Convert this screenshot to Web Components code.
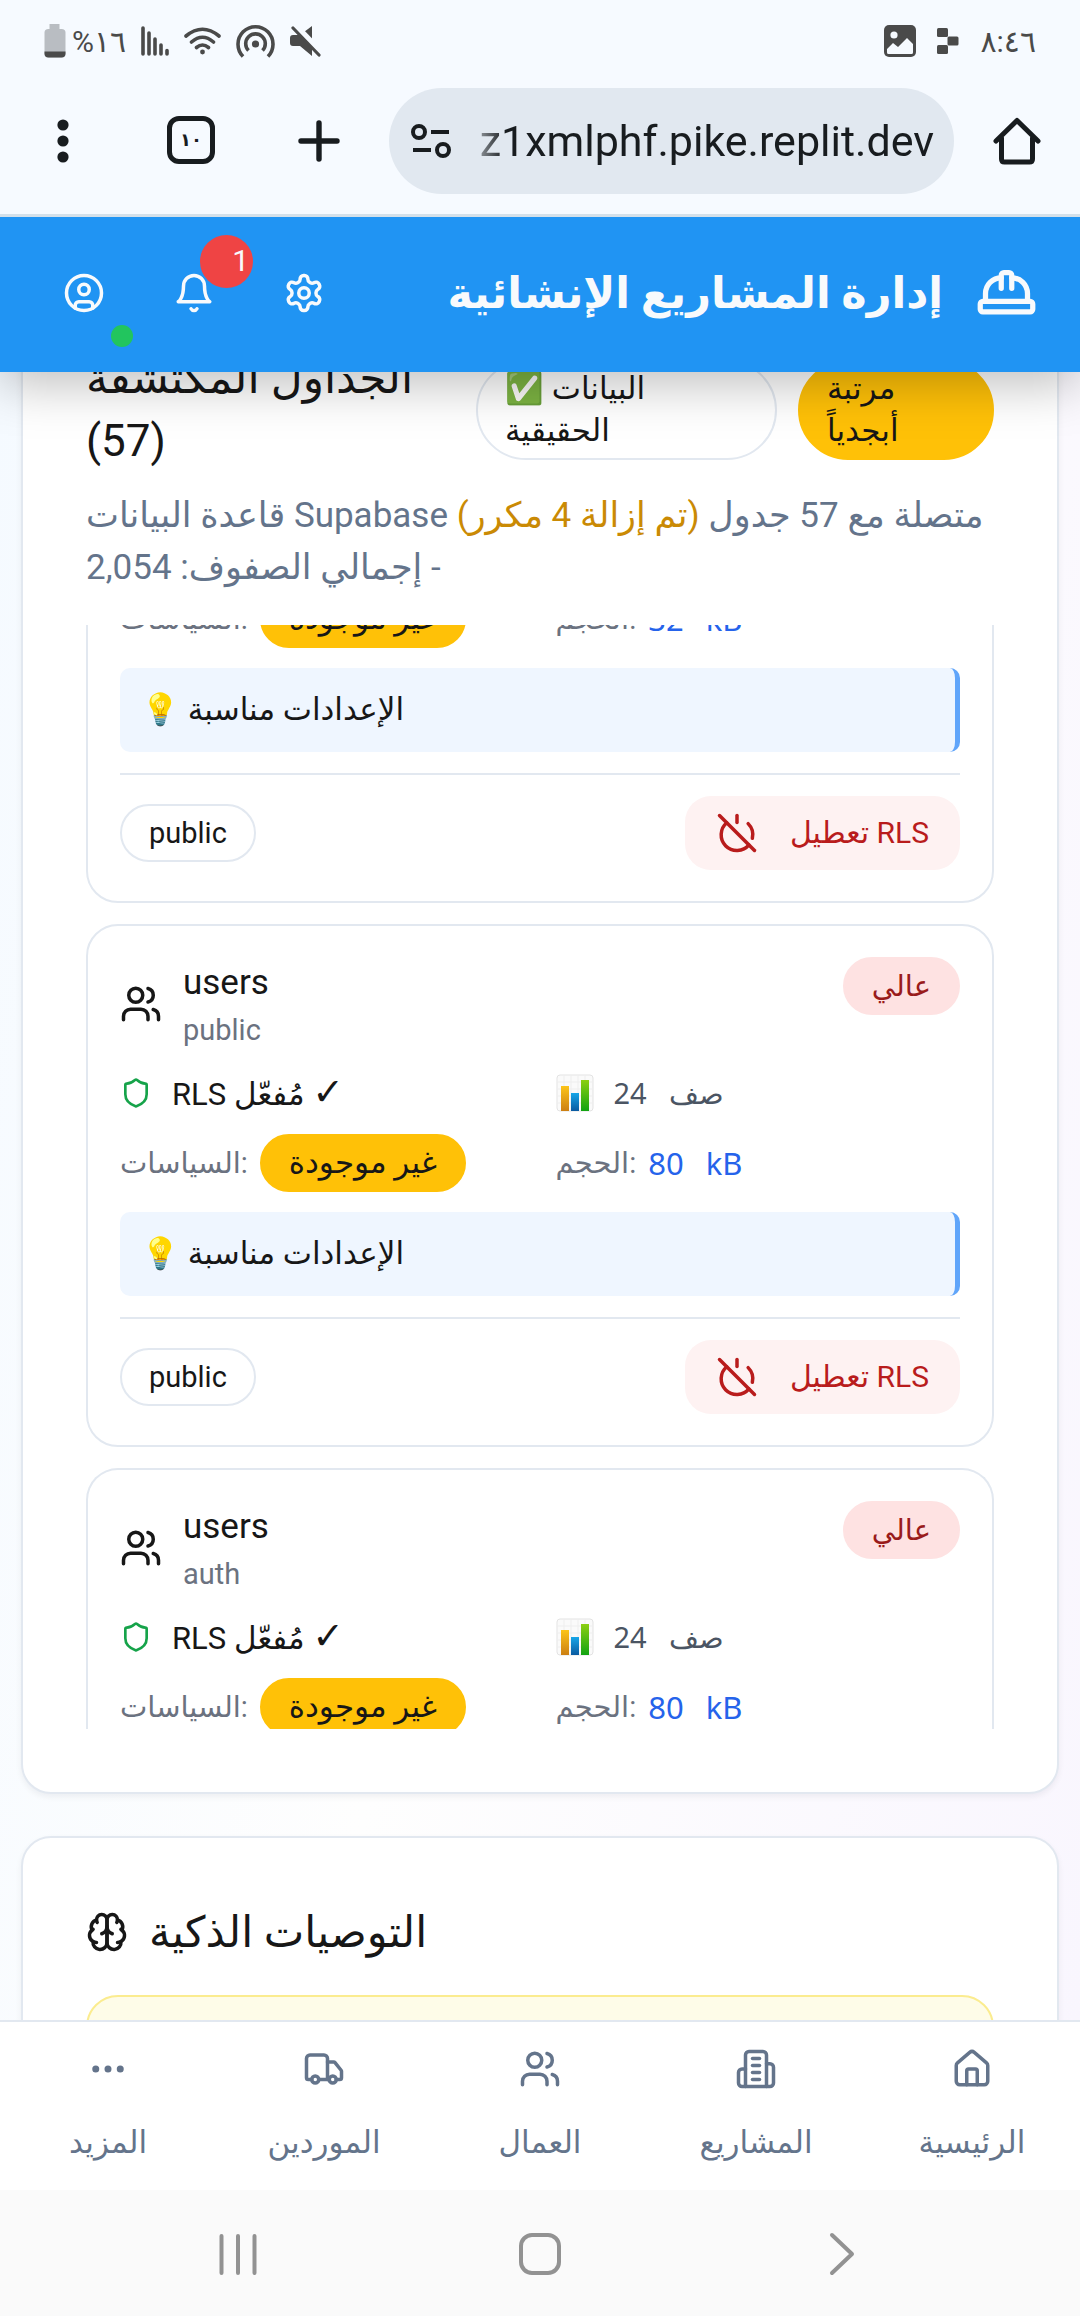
<!DOCTYPE html>
<html lang="ar">
<head>
<meta charset="utf-8">
<meta name="viewport" content="width=device-width, initial-scale=1">
<title>إدارة المشاريع الإنشائية</title>
<style>
  html, body { margin: 0; height: 100%; }
  body {
    --line: #e2e8f0;
    --muted: #64748b;
    --ink: #171717;
    --amber: #ffc107;
    font-family: Roboto, "Noto Sans", "DejaVu Sans", sans-serif;
    color: var(--ink);
    background: #f8fafc;
  }
</style>
</head>
<body>
<phone-screen></phone-screen>

<script>
const ICONS = {
  user: '<circle cx="12" cy="12" r="10"/><circle cx="12" cy="10" r="3"/><path d="M7 20.7V19a2 2 0 0 1 2-2h6a2 2 0 0 1 2 2v1.7"/>',
  bell: '<path d="M6 8a6 6 0 0 1 12 0c0 7 3 9 3 9H3s3-2 3-9"/><path d="M10.3 21a1.94 1.94 0 0 0 3.4 0"/>',
  settings: '<path d="M12.22 2h-.44a2 2 0 0 0-2 2v.18a2 2 0 0 1-1 1.73l-.43.25a2 2 0 0 1-2 0l-.15-.08a2 2 0 0 0-2.73.73l-.22.38a2 2 0 0 0 .73 2.73l.15.1a2 2 0 0 1 1 1.72v.51a2 2 0 0 1-1 1.74l-.15.09a2 2 0 0 0-.73 2.73l.22.38a2 2 0 0 0 2.73.73l.15-.08a2 2 0 0 1 2 0l.43.25a2 2 0 0 1 1 1.73V20a2 2 0 0 0 2 2h.44a2 2 0 0 0 2-2v-.18a2 2 0 0 1 1-1.73l.43-.25a2 2 0 0 1 2 0l.15.08a2 2 0 0 0 2.73-.73l.22-.39a2 2 0 0 0-.73-2.73l-.15-.08a2 2 0 0 1-1-1.74v-.5a2 2 0 0 1 1-1.74l.15-.09a2 2 0 0 0 .73-2.73l-.22-.38a2 2 0 0 0-2.73-.73l-.15.08a2 2 0 0 1-2 0l-.43-.25a2 2 0 0 1-1-1.73V4a2 2 0 0 0-2-2z"/><circle cx="12" cy="12" r="3"/>',
  hardhat: '<path d="M2 18a1 1 0 0 0 1 1h18a1 1 0 0 0 1-1v-2a1 1 0 0 0-1-1H3a1 1 0 0 0-1 1v2z"/><path d="M10 10V5a1 1 0 0 1 1-1h2a1 1 0 0 1 1 1v5"/><path d="M4 15v-3a6 6 0 0 1 6-6"/><path d="M14 6a6 6 0 0 1 6 6v3"/>',
  users: '<path d="M16 21v-2a4 4 0 0 0-4-4H6a4 4 0 0 0-4 4v2"/><circle cx="9" cy="7" r="4"/><path d="M22 21v-2a4 4 0 0 0-3-3.87"/><path d="M16 3.13a4 4 0 0 1 0 7.75"/>',
  shield: '<path d="M20 13c0 5-3.5 7.5-7.66 8.95a1 1 0 0 1-.67-.01C7.5 20.5 4 18 4 13V6a1 1 0 0 1 1-1c2 0 4.5-1.2 6.24-2.72a1.17 1.17 0 0 1 1.52 0C14.51 3.81 17 5 19 5a1 1 0 0 1 1 1z"/>',
  poweroff: '<path d="M18.36 6.64A9 9 0 0 1 20.77 15"/><path d="M6.16 6.16a9 9 0 1 0 12.68 12.68"/><path d="M12 2v4"/><path d="m2 2 20 20"/>',
  brain: '<path d="M12 5a3 3 0 1 0-5.997.125 4 4 0 0 0-2.526 5.77 4 4 0 0 0 .556 6.588A4 4 0 1 0 12 18Z"/><path d="M12 5a3 3 0 1 1 5.997.125 4 4 0 0 1 2.526 5.77 4 4 0 0 1-.556 6.588A4 4 0 1 1 12 18Z"/><path d="M15 13a4.5 4.5 0 0 1-3-4 4.5 4.5 0 0 1-3 4"/><path d="M17.599 6.5a3 3 0 0 0 .399-1.375"/><path d="M6.003 5.125A3 3 0 0 0 6.401 6.5"/><path d="M3.477 10.896a4 4 0 0 1 .585-.396"/><path d="M19.938 10.5a4 4 0 0 1 .585.396"/><path d="M6 18a4 4 0 0 1-1.967-.516"/><path d="M19.967 17.484A4 4 0 0 1 18 18"/>',
  more: '<circle cx="12" cy="12" r="1"/><circle cx="19" cy="12" r="1"/><circle cx="5" cy="12" r="1"/>',
  truck: '<path d="M14 18V6a2 2 0 0 0-2-2H4a2 2 0 0 0-2 2v11a1 1 0 0 0 1 1h2"/><path d="M15 18H9"/><path d="M19 18h2a1 1 0 0 0 1-1v-3.65a1 1 0 0 0-.22-.624l-3.48-4.35A1 1 0 0 0 17.52 8H14"/><circle cx="17" cy="18" r="2"/><circle cx="7" cy="18" r="2"/>',
  building: '<path d="M6 22V4a2 2 0 0 1 2-2h8a2 2 0 0 1 2 2v18Z"/><path d="M6 12H4a2 2 0 0 0-2 2v6a2 2 0 0 0 2 2h2"/><path d="M18 9h2a2 2 0 0 1 2 2v9a2 2 0 0 1-2 2h-2"/><path d="M10 6h4"/><path d="M10 10h4"/><path d="M10 14h4"/><path d="M10 18h4"/>',
  house: '<path d="M15 21v-8a1 1 0 0 0-1-1h-4a1 1 0 0 0-1 1v8"/><path d="M3 10a2 2 0 0 1 .709-1.528l7-5.999a2 2 0 0 1 2.582 0l7 5.999A2 2 0 0 1 21 10v9a2 2 0 0 1-2 2H5a2 2 0 0 1-2-2z"/>'
};

const RESET = `
  :host, *, *::before, *::after { box-sizing: border-box; }
  button { font: inherit; color: inherit; background: none; border: 0; padding: 0; margin: 0; }
  svg { display: block; flex: none; }
  a { color: inherit; text-decoration: none; }
`;

function define(name, html, setup) {
  const template = document.createElement('template');
  template.innerHTML = html;
  customElements.define(name, class extends HTMLElement {
    constructor() {
      super();
      this.attachShadow({ mode: 'open' }).append(template.content.cloneNode(true));
    }
    connectedCallback() { if (setup) setup(this, this.shadowRoot); }
  });
}

/* Line icon on a 24-unit grid */
define('line-icon', `
  <style>
    :host { display: block; flex: none; width: 42px; height: 42px; }
    svg { display: block; width: 100%; height: 100%; fill: none; stroke: currentColor;
          stroke-width: 2; stroke-linecap: round; stroke-linejoin: round; }
  </style>
  <svg viewBox="0 0 24 24" aria-hidden="true"></svg>`,
  (el, root) => { root.querySelector('svg').innerHTML = ICONS[el.getAttribute('name')]; });

define('pill-badge', `
  <style>
    :host { display: inline-block; flex: none; border: 2px solid var(--line); border-radius: 50px;
            padding: 6px 27px; font-size: 31px; line-height: 42px; }
    :host([tone="amber"]) { background: var(--amber); border-color: var(--amber); }
    :host([tone="red"]) { background: #fee2e2; border-color: #fee2e2; color: #991b1b; font-size: 29px; }
  </style><slot></slot>`);

define('status-bar', `
  <style>${RESET}
    :host { display: flex; direction: rtl; justify-content: space-between; align-items: center;
            height: 82px; padding: 0 44px; color: #4a4a4a; font-size: 30px; }
    div { display: flex; align-items: center; direction: ltr; }
    .left { gap: 15px; } .right { gap: 21px; }
    .charge { display: flex; align-items: center; gap: 6px; }
  </style>
  <div class="right">
    <svg width="32" height="32" viewBox="0 0 32 32"><rect width="32" height="32" rx="5" fill="#4a4a4a"/><circle cx="10" cy="10" r="3.6" fill="#f6faff"/><path d="M3 24l6-6 5 4 9-9 6 6v8.500q0 1.500-1.500 1.500h-23q-1.500 0-1.500-1.500z" fill="#f6faff"/></svg>
    <svg width="22" height="26" viewBox="0 0 22 26" fill="#4a4a4a"><rect width="11" height="9" rx="1.500"/><rect x="10.500" y="8.500" width="11" height="9" rx="1.500"/><rect y="17" width="11" height="9" rx="1.500"/></svg>
    <span>٨:٤٦</span>
  </div>
  <div class="left">
    <div class="charge">
      <svg width="22" height="34" viewBox="0 0 22 34"><path d="M5.500 0h10v5h2q4 0 4 3.500v21q0 4-4 4h-13q-4 0-4-4v-21q0-3.500 4-3.500h1z" fill="#b9bdc2"/><path d="M.5 27.500h21v2q0 4-4 4h-13q-4 0-4-4z" fill="#4a4a4a"/></svg>
      <span>%١٦</span>
    </div>
    <svg width="28" height="30" viewBox="0 0 28 30" stroke="#4a4a4a" stroke-width="3.600" stroke-linecap="round"><path d="M2 2v26M8 7v21M14 13v15M20 19v9M26 24.500v3.500"/></svg>
    <svg width="37" height="28" viewBox="0 0 37 28" fill="none" stroke="#4a4a4a" stroke-width="3.600" stroke-linecap="round"><path d="M2 9q16.500-13.500 33 0M7.500 15q11-9.500 22 0M12.500 20.500q6-5 12 0"/><circle cx="18.500" cy="25" r="2.400" fill="#4a4a4a" stroke="none"/></svg>
    <svg width="39" height="34" viewBox="0 0 39 34" fill="none" stroke="#4a4a4a" stroke-width="3.600" stroke-linecap="butt"><path d="M7 32.500A17.500 17.500 0 1 1 32 32.500M12.500 26.500A9.800 9.800 0 1 1 26.500 26.500"/><circle cx="19.500" cy="20" r="3.600" fill="#4a4a4a" stroke="none"/></svg>
    <svg width="31" height="32" viewBox="0 0 31 32"><path d="M0 13q0-3 3-3h7L22 1v30L10 21H3q-3 0-3-3z" fill="#4a4a4a"/><path d="M0 -1l30 31" stroke="#f6faff" stroke-width="6" transform="translate(2.500 -1.500)"/><path d="M3 3l26 27" stroke="#4a4a4a" stroke-width="3.200" stroke-linecap="round"/></svg>
  </div>`);

define('browser-bar', `
  <style>${RESET}
    :host { display: flex; align-items: center; height: 132px; padding: 0 38px 14px; color: #181c1f;
            position: relative; z-index: 3; background: #f6faff; }
    button { display: grid; place-items: center; width: 50px; height: 50px; }
    .tools { display: flex; gap: 79px; margin-right: 45px; }
    .tabs { border: 5px solid #181c1f; border-radius: 12px; width: 48px; height: 48px; font-size: 18px; font-weight: 700; line-height: 38px; }
    label { display: flex; align-items: center; gap: 24px; flex: 1; min-width: 0; height: 106px; margin-right: 38px;
            padding: 0 20px 0 22px; border-radius: 53px; background: #e1e8f0; }
    input { flex: 1; min-width: 0; height: 64px; padding: 0; border: 0; outline: 0; background: none; color: inherit;
            font: 43px Roboto, sans-serif; text-align: right;
            -webkit-mask-image: linear-gradient(90deg, #0005, #000 30px); mask-image: linear-gradient(90deg, #0005, #000 30px); }
  </style>
  <div class="tools">
    <button aria-label="القائمة"><svg width="12" height="44" viewBox="0 0 12 44" fill="currentColor"><circle cx="6" cy="6" r="5.600"/><circle cx="6" cy="22" r="5.600"/><circle cx="6" cy="38" r="5.600"/></svg></button>
    <button class="tabs" aria-label="علامات التبويب">١٠</button>
    <button aria-label="علامة تبويب جديدة"><svg width="42" height="42" viewBox="0 0 42 42" stroke="currentColor" stroke-width="5.400" stroke-linecap="round"><path d="M21 3v36M3 21h36"/></svg></button>
  </div>
  <label>
    <svg width="40" height="34" viewBox="0 0 40 34" fill="none" stroke="currentColor" stroke-width="4"><circle cx="8" cy="8" r="6"/><circle cx="32" cy="26" r="6"/><path d="M20 8h18M2 26h18"/></svg>
    <input type="text" aria-label="عنوان الموقع" value="z1xmlphf.pike.replit.dev">
  </label>
  <button aria-label="الصفحة الرئيسية"><svg width="48" height="48" viewBox="0 0 48 48" fill="none" stroke="currentColor" stroke-width="5" stroke-linejoin="round" stroke-linecap="round"><path d="M3 24L24 3.500 45 24M8.500 21v21q0 3 3 3h25q3 0 3-3V21"/></svg></button>`);

define('app-header', `
  <style>${RESET}
    :host { display: flex; align-items: center; justify-content: space-between; position: relative; z-index: 2;
            height: 158px; padding: 0 42px 3px 52px; background: #2094f3; color: #f8fafc; flex: none;
            border-top: 3px solid #d3e0ea;
            box-shadow: 0 12px 48px rgba(0,0,0,.26); }
    .actions, .brand { display: flex; align-items: center; }
    .actions { gap: 46px; }
    .actions button { position: relative; display: grid; place-items: center; width: 64px; height: 106px; }
    .count { position: absolute; top: -5px; right: -27px; width: 53px; height: 53px; border-radius: 50%;
             background: #ef4444; font-size: 30px; line-height: 52px; text-align: right; padding-right: 4px; }
    .online { position: absolute; right: -17px; bottom: -1px; width: 22px; height: 22px; border-radius: 50%; background: #22c55e; }
    .brand { direction: rtl; gap: 32px; }
    h1 { margin: 0; font-size: 43px; line-height: 64px; font-weight: 700; }
    .brand line-icon { width: 63px; height: 63px; }
  </style>
  <div class="actions">
    <button aria-label="الحساب"><line-icon name="user"></line-icon><span class="online"></span></button>
    <button aria-label="الإشعارات"><line-icon name="bell"></line-icon><span class="count">1</span></button>
    <button aria-label="الإعدادات"><line-icon name="settings"></line-icon></button>
  </div>
  <div class="brand"><line-icon name="hardhat"></line-icon><h1>إدارة المشاريع الإنشائية</h1></div>`);

define('panel-card', `
  <style>
    :host { display: block; box-sizing: border-box; flex: none; padding: 63px; border: 2px solid var(--line); border-radius: 30px;
            background: #fff; box-shadow: 0 3px 6px rgba(15,23,42,.06); }
  </style><slot></slot>`);

/* One database table: heading, facts, advice and actions */
define('table-card', `
  <style>${RESET}
    :host { display: flex; flex-direction: column; gap: 21px; flex: none;
            padding: 31px 32px; border: 2px solid var(--line); border-radius: 32px; background: #fff; font-size: 31px; line-height: 42px; }
    header, footer, .fact, .who, .value { display: flex; }
    header { justify-content: space-between; align-items: flex-start; }
    .who { align-items: center; gap: 21px; }
    h3 { margin: 0; font-size: 35px; line-height: 52px; font-weight: 400; }
    .schema { margin: 0; color: #6b7280; font-size: 29px; }
    .facts { display: grid; grid-template-columns: 1fr 1fr; column-gap: 31px; }
    .fact { align-items: center; gap: 12px; min-width: 0; white-space: nowrap; }
    .first .fact { gap: 20px; height: 42px; }
    .second .fact { height: 56px; }
    .rls line-icon { width: 32px; height: 32px; color: #16a34a; }
    .tick { font-size: 38px; }
    .label { color: #6b7280; font-size: 29px; }
    .value { gap: 22px; font-family: "Noto Sans", "Open Sans", sans-serif; color: #4b5563; }
    .rows { font-size: 29px; }
    .size { color: #2563eb; }
    .tip { margin: 0; padding: 21px; background: #eff6ff; border-right: 5px solid #60a5fa; border-radius: 10px; }
    footer { align-items: center; justify-content: space-between; border-top: 2px solid var(--line); padding-top: 21px; }
    footer button { display: flex; align-items: center; gap: 32px; height: 74px; padding: 0 31px; border-radius: 26px;
                    background: #fef2f2; color: #b91c1c; font-size: 30px; }
    .scope { font-size: 29px; }
  </style>
  <header>
    <div class="who"><line-icon name="users"></line-icon><div><h3>users</h3><p class="schema"></p></div></div>
    <pill-badge tone="red">عالي</pill-badge>
  </header>
  <div class="facts first">
    <div class="fact rls"><line-icon name="shield"></line-icon><span>RLS مُفعّل <span class="tick">✓</span></span></div>
    <div class="fact">
      <svg width="38" height="38" viewBox="0 0 38 38" role="img" aria-label="رسم بياني">
        <defs>
          <linearGradient id="o" x2="0" y2="1"><stop stop-color="#fcc419"/><stop offset="1" stop-color="#cc7f12"/></linearGradient>
          <linearGradient id="b" x2="0" y2="1"><stop stop-color="#16a6e8"/><stop offset="1" stop-color="#0a5aa0"/></linearGradient>
          <linearGradient id="g" x2="0" y2="1"><stop stop-color="#8ccf12"/><stop offset="1" stop-color="#12a312"/></linearGradient>
        </defs>
        <rect x="1" y="1" width="36" height="36" rx="3" fill="#fafafa" stroke="#e3e3e3"/>
        <path d="M1 8h36M1 15h36M1 22h36M1 29h36M8 1v36M15 1v36M22 1v36M29 1v36" stroke="#eeeeee"/>
        <rect x="5" y="12" width="8" height="25" fill="url(#o)"/><rect x="15" y="19" width="8" height="18" fill="url(#b)"/><rect x="25" y="6" width="8" height="31" fill="url(#g)"/>
      </svg>
      <span class="value rows"><span>24</span> <span>صف</span></span></div>
  </div>
  <div class="facts second">
    <div class="fact"><span class="label">السياسات:</span><pill-badge tone="amber">غير موجودة</pill-badge></div>
    <div class="fact"><span class="label">الحجم:</span><span class="value size"><span class="amount"></span> <span>kB</span></span></div>
  </div>
  <p class="tip">💡 الإعدادات مناسبة</p>
  <footer><pill-badge class="scope">public</pill-badge>
    <button><line-icon name="poweroff"></line-icon><span>تعطيل RLS</span></button></footer>`,
  (el, root) => {
    root.querySelector('.amount').textContent = el.getAttribute('size');
    root.querySelector('.schema').textContent = el.getAttribute('schema');
    if (el.hasAttribute('scrolled')) root.querySelectorAll('header, .first').forEach(n => n.remove());
    if (el.hasAttribute('below')) root.querySelectorAll('.tip, footer').forEach(n => n.remove());
  });

define('tables-panel', `
  <style>${RESET}
    .top { display: flex; align-items: center; gap: 21px; height: 126px; }
    h2 { flex: 1; min-width: 0; margin: 0; font-size: 44px; line-height: 63px; font-weight: 400; }
    .real { width: 301px; } .sorted { width: 196px; }
    .about { margin: 17px 0 31px; font-size: 35px; line-height: 52px; color: var(--muted); }
    .about span { color: #ca8a04; }
    .list { max-height: 1104px; overflow: hidden; }
    .stack { display: flex; flex-direction: column; gap: 21px; margin-top: -67px; padding-bottom: 21px; }
    table-card[below] { min-height: 300px; border-bottom: 0; border-radius: 32px 32px 0 0; }
  </style>
  <panel-card>
    <div class="top">
      <h2>الجداول المكتشفة (57)</h2>
      <pill-badge class="real">✅ البيانات<br>الحقيقية</pill-badge>
      <pill-badge class="sorted" tone="amber">مرتبة<br>أبجدياً</pill-badge>
    </div>
    <p class="about">قاعدة البيانات Supabase متصلة مع 57 جدول <span>(تم إزالة 4 مكرر)</span> - إجمالي الصفوف: 2,054</p>
    <div class="list"><div class="stack">
      <table-card scrolled size="32"></table-card>
      <table-card schema="public" size="80"></table-card>
      <table-card below schema="auth" size="80"></table-card>
    </div></div>
  </panel-card>`);

define('advice-panel', `
  <style>${RESET}
    h2 { display: flex; align-items: center; gap: 21px; margin: 0 0 32px; font-size: 43px; line-height: 62px; font-weight: 400; }
    .note { height: 120px; border: 2px solid #fbec8f; border-radius: 32px; background: #fefce8; }
  </style>
  <panel-card><h2><line-icon name="brain"></line-icon>التوصيات الذكية</h2><div class="note"></div></panel-card>`);

define('app-nav', `
  <style>${RESET}
    :host { display: block; flex: none; position: relative; z-index: 2; background: #fff; border-top: 2px solid var(--line); color: var(--muted); }
    nav { display: grid; grid-template-columns: repeat(5, 1fr); direction: rtl; height: 168px; }
    a { display: flex; flex-direction: column; align-items: center; padding-top: 26px; gap: 32px; font-size: 31px; line-height: 42px; }
  </style>
  <nav>
    <a href="#home"><line-icon name="house"></line-icon>الرئيسية</a>
    <a href="#projects"><line-icon name="building"></line-icon>المشاريع</a>
    <a href="#workers"><line-icon name="users"></line-icon>العمال</a>
    <a href="#suppliers"><line-icon name="truck"></line-icon>الموردين</a>
    <a href="#more"><line-icon name="more"></line-icon>المزيد</a>
  </nav>`);

define('system-nav', `
  <style>${RESET}
    :host { display: flex; align-items: center; justify-content: space-between; flex: none; height: 126px;
            padding: 2px 20% 0; background: #fafafa; }
    button { display: grid; place-items: center; width: 44px; height: 44px; }
    svg { fill: none; stroke: #929292; stroke-width: 4; stroke-linecap: round; stroke-linejoin: round; }
  </style>
  <button aria-label="التطبيقات الأخيرة"><svg width="44" height="44"><path d="M5.500 4v37M22 4v37M38.500 4v37"/></svg></button>
  <button aria-label="الشاشة الرئيسية"><svg width="44" height="44"><rect x="3" y="3" width="38" height="38" rx="11"/></svg></button>
  <button aria-label="رجوع"><svg width="44" height="44"><path d="M12 3l20 19-20 19"/></svg></button>`);

define('phone-screen', `
  <style>
    :host { display: flex; flex-direction: column; height: 100vh; overflow: hidden; background: #f6faff; }
    main { flex: 1; min-height: 0; overflow: hidden; display: flex; flex-direction: column; gap: 42px; padding: 0 21px;
           background: linear-gradient(100deg, #f5faff, #fefefe 45%, #f9f6fe); }
    tables-panel { display: block; margin-top: -90px; }
    advice-panel { display: block; }
  </style>
  <status-bar></status-bar>
  <browser-bar></browser-bar>
  <app-header></app-header>
  <main><tables-panel></tables-panel><advice-panel></advice-panel></main>
  <app-nav></app-nav>
  <system-nav></system-nav>`);
</script>
</body>
</html>
